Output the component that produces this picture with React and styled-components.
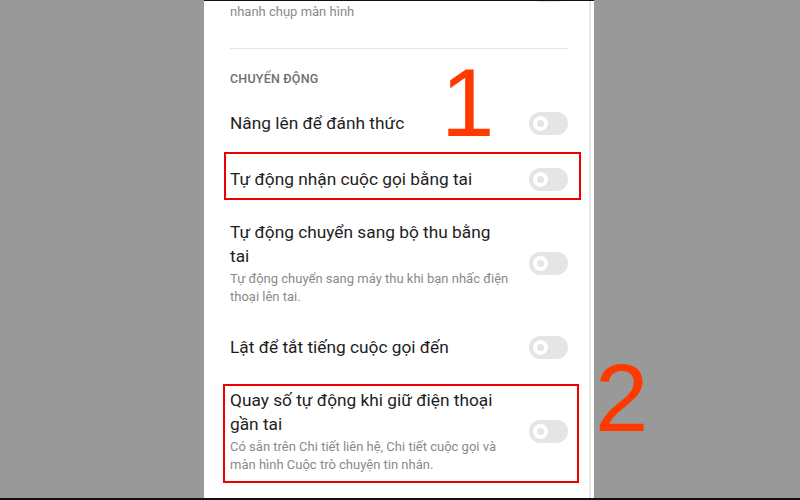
import styled, { createGlobalStyle } from "styled-components";

const Global = createGlobalStyle`
    html, body {
        margin: 0;
        padding: 0;
        background: #999999;
    }
    * {
        box-sizing: border-box;
    }
`

const Stage = styled.div`
    position: relative;
    width: 800px;
    height: 500px;
    overflow: hidden;
    display: flex;
    background: #999999;
    border-bottom: 2px solid #111;
    font-family: Roboto, "Noto Sans", "Liberation Sans", sans-serif;
`

const Screen = styled.div`
    margin-left: 204px;
    width: 390px;
    height: 100%;
    overflow: hidden;
    border-top: 1px solid #111;
    padding: 0 26px;
    background: linear-gradient(to left, #fff 3px, #e8e8e8 3px, #e8e8e8 5px, #fff 5px);
`

const List = styled.div`
    display: flex;
    flex-direction: column;
    margin-top: -55px;
`

const Row = styled.div`
    display: flex;
    align-items: center;
    justify-content: space-between;
    column-gap: 12px;
    min-height: ${p => p.$min ?? 56}px;
    padding: ${p => p.$pad ?? "13px 0"};
`

const TextCol = styled.div`
    display: flex;
    flex-direction: column;
    row-gap: 2px;
    max-width: 292px;
`

const Title = styled.p`
    margin: 0;
    max-width: 276px;
    color: #1e1e1e;
    font-size: 17.3px;
    line-height: 24px;
`

const Desc = styled.p`
    margin: 0;
    color: #8a8a8a;
    font-size: 13px;
    line-height: 18px;
`

const Divider = styled.hr`
    margin: 14px 0 0;
    border: none;
    border-top: 1px solid #e6e6e6;
`

const Section = styled.p`
    margin: 22px 0 8px;
    color: #6e6e6e;
    font-size: 12.5px;
    font-weight: 500;
    line-height: 16px;
    letter-spacing: 0.2px;
`

const Highlight = styled.div`
    border: 2px solid #ee0000;
    margin: ${p => p.$margin};
    padding: ${p => p.$pad};
`

const Track = styled.div`
    flex-shrink: 0;
    width: 39px;
    height: 23px;
    border-radius: 12px;
    background: #e5e5e5;
    display: flex;
    align-items: center;
    padding-left: 4px;
`

const Knob = styled.div`
    width: 15px;
    height: 15px;
    border-radius: 50%;
    background: #fff;
    display: flex;
    align-items: center;
    justify-content: center;

    &::after {
        content: "";
        width: 7px;
        height: 7px;
        border-radius: 50%;
        background: #e5e5e5;
    }
`

const Mark = styled.span`
    position: absolute;
    left: ${p => p.$x}px;
    top: ${p => p.$y}px;
    color: #ff3a00;
    font-family: "Liberation Sans", Arial, sans-serif;
    font-size: 96px;
    line-height: 1;
`

const Toggle = () => (
    <Track>
        <Knob />
    </Track>
)

const Setting = ({ title, desc, ...rest }) => (
    <Row {...rest}>
        <TextCol>
            {title && <Title>{title}</Title>}
            {desc && <Desc>{desc}</Desc>}
        </TextCol>
        <Toggle />
    </Row>
)

const App = () => {
    return (
        <Stage>
            <Global />
            <Screen>
                <List>
                    <Setting
                        title="Vuốt xuống bằng ba ngón tay"
                        desc={<>Vuốt xuống bằng ba ngón tay để<br />nhanh chụp màn hình</>}
                    />
                    <Divider />
                    <Section>CHUYỂN ĐỘNG</Section>
                    <Setting title="Nâng lên để đánh thức" />
                    <Highlight $margin="1px -13px 7px -6px" $pad="0 11px 0 4px">
                        <Setting title="Tự động nhận cuộc gọi bằng tai" $min={44} $pad="13px 0 7px" />
                    </Highlight>
                    <Setting
                        title="Tự động chuyển sang bộ thu bằng tai"
                        desc="Tự động chuyển sang máy thu khi bạn nhấc điện thoại lên tai."
                    />
                    <Setting title="Lật để tắt tiếng cuộc gọi đến" />
                    <Highlight $margin="9px -11px 0 -7px" $pad="0 9px 0 5px">
                        <Setting
                            title="Quay số tự động khi giữ điện thoại gần tai"
                            desc="Có sẵn trên Chi tiết liên hệ, Chi tiết cuộc gọi và màn hình Cuộc trò chuyện tin nhắn."
                            $min={44}
                            $pad="2px 0 7px"
                        />
                    </Highlight>
                </List>
            </Screen>
            <Mark $x={441} $y={55}>1</Mark>
            <Mark $x={595} $y={350}>2</Mark>
        </Stage>
    )
}

export default App
